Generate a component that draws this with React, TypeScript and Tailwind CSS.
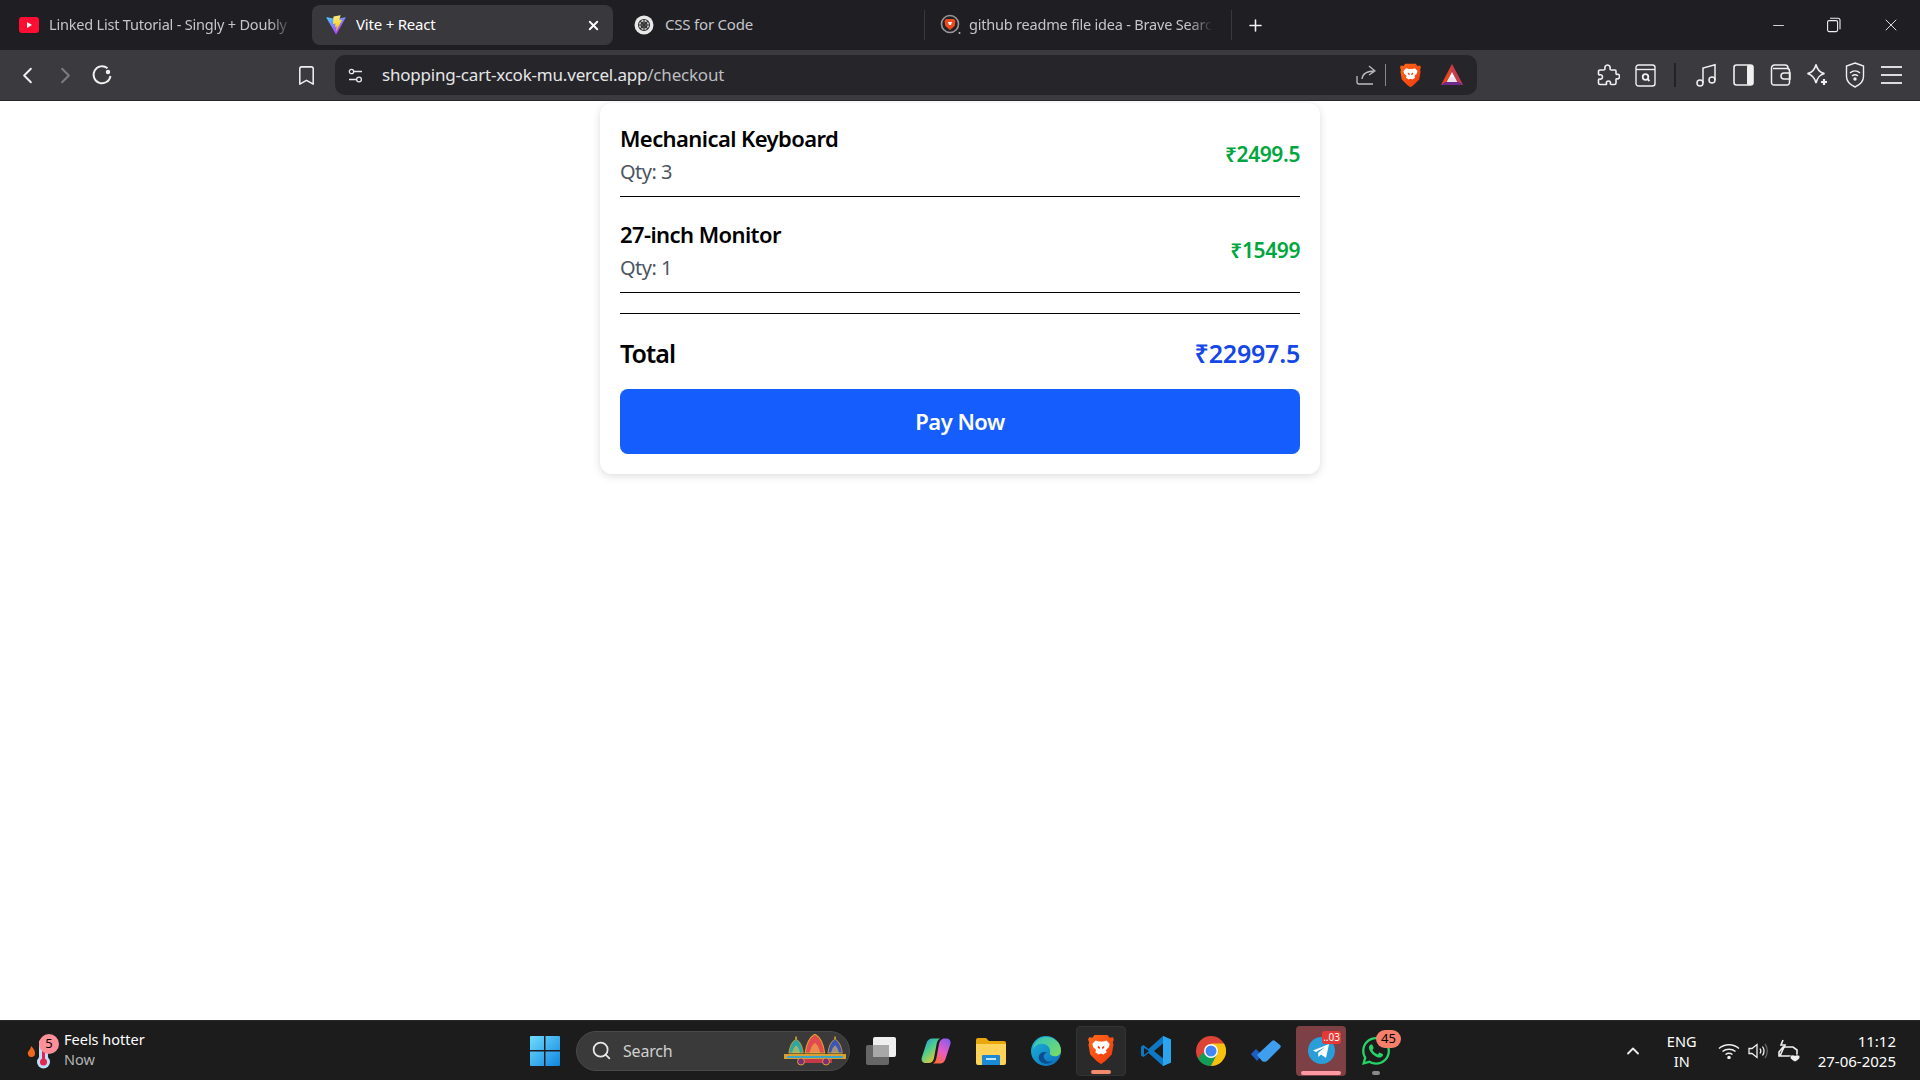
import React from "react";
import { ChevronLeft, ChevronRight, Bookmark, X, Plus, Minus, Search, ChevronUp } from "lucide-react";
import { FaWhatsapp } from "react-icons/fa";

const ui = { fontFamily: '"Noto Sans", "Open Sans", sans-serif' };

function BraveIcon({ size = 22 }: { size?: number }) {
  return (
    <svg width={size} height={size * 1.16} viewBox="0 0 24 28">
      <defs>
        <linearGradient id="brv" x1="0" y1="0" x2="1" y2="1">
          <stop offset="0" stopColor="#ff6a1a" />
          <stop offset="1" stopColor="#f0360e" />
        </linearGradient>
      </defs>
      <path d="M6 1h12l2 2.500 3-.5 1 2-1 3 .6 2L22 19l-6 6-4 3-4-3-6-6L.4 10 1 8 0 5l1-2 3 .5z" fill="url(#brv)" />
      <path d="M7 6l3 1h4l3-1 3 3-.6 3-3 3 1 2-3.4 2-2-1-2 1-3.4-2 1-2-3-3L4 9z" fill="#fff" />
      <path d="M9 11l2 1v2l-2-1zM15 11l-2 1v2l2-1zM10.500 19h3L12 21z" fill="#f0400f" />
    </svg>
  );
}

function ViteIcon() {
  return (
    <svg width="20" height="20" viewBox="0 0 410 404">
      <defs>
        <linearGradient id="v1" x1="0" y1="0" x2="0.6" y2="1">
          <stop offset="0" stopColor="#41d1ff" />
          <stop offset="1" stopColor="#bd34fe" />
        </linearGradient>
        <linearGradient id="v2" x1="0.4" y1="0" x2="0.5" y2="1">
          <stop offset="0" stopColor="#ffea83" />
          <stop offset="0.5" stopColor="#ffdd35" />
          <stop offset="1" stopColor="#ffa800" />
        </linearGradient>
      </defs>
      <path d="M399.600 59.500 215.900 388.200c-3.800 6.800-13.500 6.800-17.400.1L11.200 59.500c-4.200-7.400 2.100-16.300 10.400-14.800l183.900 32.900c1.200.2 2.400.2 3.500 0l180-32.800c8.300-1.500 14.700 7.300 10.600 14.700z" fill="url(#v1)" />
      <path d="M292.900 1.600 156.900 28.300c-2.200.4-3.900 2.300-4 4.600l-8.400 141.300c-.2 3.300 2.900 5.900 6.100 5.200l37.900-8.800c3.500-.8 6.700 2.300 6 5.900l-11.300 55.200c-.8 3.700 2.700 6.900 6.300 5.800l23.400-7.100c3.600-1.100 7.100 2.100 6.300 5.800l-17.900 86.600c-1.100 5.400 6.100 8.400 9.100 3.700l2-3.100 110.700-221c1.900-3.700-1.300-7.900-5.400-7.100l-38.900 7.500c-3.700.7-6.800-2.700-5.700-6.300l25.400-88c1.100-3.600-2.100-7-5.700-6.300z" fill="url(#v2)" />
    </svg>
  );
}

function Tab({ width, active, icon, label, fade, close }: { width: number; active?: boolean; icon: React.ReactNode; label: string; fade?: boolean; close?: boolean }) {
  return (
    <div className={`flex h-10 shrink-0 items-center rounded-lg px-[14px] ${active ? "bg-[#38383d] text-white" : "text-[#c6c6ca]"}`} style={{ width }}>
      <div className="flex w-[20px] shrink-0 justify-center">{icon}</div>
      <div className={`ml-[10px] flex-1 overflow-hidden whitespace-nowrap pb-[1px] ${fade ? "text-[14.5px] tracking-[-0.2px] [mask-image:linear-gradient(to_right,black_90%,transparent)]" : "text-[15px] tracking-[-0.2px]"}`}>{label}</div>
      {close && <X size={15} strokeWidth={3} className="ml-[2px] mr-[-2px] shrink-0" />}
    </div>
  );
}

function TabBar() {
  return (
    <div className="flex h-[50px] items-center bg-[#1e1e23]">
      <div className="ml-[5px] w-[307px] shrink-0">
        <Tab width={302} fade label="Linked List Tutorial - Singly + Doubly" icon={
          <svg width="20" height="16" viewBox="0 0 20 16"><rect width="20" height="16" rx="3" fill="#ff0d33" /><path d="M8 5l5 3-5 3z" fill="#fff" /></svg>
        } />
      </div>
      <Tab width={301} active close label="Vite + React" icon={<ViteIcon />} />
      <div className="w-[311px] shrink-0 pl-[8px]">
        <Tab width={240} label="CSS for Code" icon={
          <svg width="20" height="20" viewBox="0 0 20 20" className="-ml-[2px]">
            <circle cx="10" cy="10" r="9.500" fill="#e8e8e8" />
            <g fill="none" stroke="#333" strokeWidth="1.100">
              <circle cx="10" cy="10" r="5.500" />
              <circle cx="10" cy="10" r="3" />
              <path d="M6 6l8 8M14 6l-8 8M10 4v12M4 10h12" />
            </g>
          </svg>
        } />
      </div>
      <div className="h-[30px] w-px shrink-0 bg-[#38383d]" />
      <div className="w-[306px] shrink-0">
        <Tab width={302} fade label="github readme file idea - Brave Search" icon={
          <svg width="22" height="22" viewBox="0 0 22 22" className="ml-[2px] mr-[-2px] shrink-0">
            <circle cx="10" cy="10" r="8.500" fill="#222" stroke="#999" strokeWidth="1.600" />
            <path d="M6 5h8l1.500 2-.8 5-4.700 4-4.700-4-.8-5z" fill="#f04a1e" />
            <path d="M8 8h4l-1 3h-2z" fill="#fff" />
            <circle cx="19.500" cy="19" r="1" fill="#bbb" />
          </svg>
        } />
      </div>
      <div className="h-[30px] w-px shrink-0 bg-[#38383d]" />
      <Plus size={19} strokeWidth={2} className="ml-[14px] shrink-0 text-[#f2f2f2]" />
      <div className="ml-auto flex items-center text-[#f0f0f0]">
        <div className="flex w-[56px] justify-center"><Minus size={17} strokeWidth={1.200} /></div>
        <div className="flex w-[56px] justify-center">
          <svg width="14" height="16" viewBox="0 0 14 16" fill="none" stroke="currentColor" strokeWidth="1.100"><rect x="0.600" y="3.600" width="10" height="11" rx="1.500" /><path d="M3 1.200h8a2 2 0 0 1 2 2v9" /></svg>
        </div>
        <div className="flex w-[58px] justify-center"><X size={20} strokeWidth={1.100} /></div>
      </div>
    </div>
  );
}

function ToolBtn({ children, w = 37 }: { children: React.ReactNode; w?: number }) {
  return <div className="flex shrink-0 items-center justify-center text-[#f0f0f0]" style={{ width: w }}>{children}</div>;
}

function ToolBar() {
  return (
    <div className="flex h-[51px] items-center border-b border-[#26262a] bg-[#3a3a3f]">
      <div className="ml-[8px] flex">
        <ToolBtn w={38}><ChevronLeft size={27} strokeWidth={1.700} /></ToolBtn>
        <ToolBtn w={38}><ChevronRight size={27} strokeWidth={1.700} className="text-[#7d7d82]" /></ToolBtn>
        <ToolBtn w={36}>
          <svg width="22" height="22" viewBox="0 0 22 22" fill="none" stroke="#f0f0f0" strokeWidth="1.900">
            <path d="M16.500 4.200A8.500 8.500 0 1 0 19.500 12" />
            <circle cx="17" cy="8" r="2.200" fill="#f0f0f0" stroke="none" />
          </svg>
        </ToolBtn>
      </div>
      <div className="ml-[167px]"><ToolBtn w={38}><Bookmark size={23} strokeWidth={1.600} /></ToolBtn></div>
      <div className="ml-[10px] flex h-10 w-[1142px] shrink-0 items-center rounded-[10px] bg-[#25252a] pl-[12px] pr-[13px]">
        <svg width="17" height="17" viewBox="0 0 17 17" fill="none" stroke="#e8e8e8" strokeWidth="1.300" className="shrink-0">
          <circle cx="4.500" cy="4.500" r="2.200" /><path d="M7 4.500h8M2 12.500h7" /><circle cx="12" cy="12.500" r="2.400" />
        </svg>
        <div className="ml-[18px] whitespace-nowrap text-[17px] tracking-[-0.2px]">
          <span className="text-[#e6e6e6]">shopping-cart-xcok-mu.vercel.app</span><span className="text-[#bdbdc0]">/checkout</span>
        </div>
        <div className="ml-auto flex items-center">
          <svg width="20" height="20" viewBox="0 0 20 20" fill="none" stroke="#bdbdc0" strokeWidth="1.300">
            <path d="M1 11v6a2 2 0 0 0 2 2h14M6 14c.5-5 4-8 13-8M13 1l6 5-6 4" />
          </svg>
          <div className="ml-[9px] h-[22px] w-px bg-[#88888c]" />
          <div className="ml-[14px]"><BraveIcon size={21} /></div>
          <svg width="24" height="24" viewBox="0 0 24 24" className="ml-[19px]">
            <path d="M12 1 1 22h22z" fill="#e8461f" />
            <path d="M12 1 23 22H8z" fill="#a8327a" opacity="0.55" />
            <path d="M1 22l4-3h14l4 3z" fill="#6e2a8c" />
            <path d="M12 9l5 10H7z" fill="#fff" />
            <path d="M9.500 14h5l2.500 5H7z" fill="#e9e3ee" />
          </svg>
        </div>
      </div>
      <div className="ml-[113px] flex items-center">
        <ToolBtn>
          <svg width="23" height="23" viewBox="0 0 23 23" fill="none" stroke="currentColor" strokeWidth="1.600" strokeLinejoin="round">
            <path d="M8 5c-.5-2 .5-4 2.500-4S13.500 3 13 5c0 .7.5 1 1.500 1H18a1 1 0 0 1 1 1v2.500c0 .8.700 1 1.500.8 1.500-.3 2 1 2 2.200s-.8 2.600-2.300 2.300c-.8-.2-1.200.2-1.200 1V19a1.500 1.500 0 0 1-1.500 1.500h-3c-1 0-1.300-.6-1.100-1.300.3-1-.2-2.200-1.900-2.200s-2.500 1.200-2 2.300c.3.7 0 1.200-1 1.200H3A1.500 1.500 0 0 1 1.500 19v-3c0-.8.600-1.200 1.300-1 1.200.3 2.700-.3 2.700-2s-1.500-2.500-2.700-2.200C2.100 11 1.500 10.700 1.500 10V7.500A1.500 1.500 0 0 1 3 6h3.500C7.500 6 8 5.700 8 5z" />
          </svg>
        </ToolBtn>
        <ToolBtn>
          <svg width="21" height="23" viewBox="0 0 21 23" fill="none" stroke="currentColor" strokeWidth="1.400"><rect x="1" y="1" width="19" height="21" rx="2.500" /><path d="M1 5.500h19" /><circle cx="10.500" cy="13" r="2.800" strokeWidth="1.800" /><path d="M12.500 15l2 2" strokeWidth="1.800" /></svg>
        </ToolBtn>
        <div className="mx-[10px] h-[24px] w-[2px] bg-[#232327]" />
        <div className="ml-[2px]" />
        <ToolBtn>
          <svg width="21" height="24" viewBox="0 0 21 24" fill="none" stroke="currentColor" strokeWidth="1.500"><circle cx="4" cy="20" r="3" /><circle cx="16" cy="17" r="3" /><path d="M7 20V5l12-3.200V17" /></svg>
        </ToolBtn>
        <ToolBtn>
          <svg width="21" height="22" viewBox="0 0 21 22"><rect x="1" y="1" width="19" height="20" rx="2.500" fill="none" stroke="#f0f0f0" strokeWidth="1.600" /><rect x="14" y="1" width="6" height="20" rx="1.500" fill="#f0f0f0" /></svg>
        </ToolBtn>
        <ToolBtn>
          <svg width="21" height="22" viewBox="0 0 21 22" fill="none" stroke="currentColor" strokeWidth="1.500"><path d="M3 4.500h14a2.500 2.500 0 0 1 2.500 2.500v11.500A2.500 2.500 0 0 1 17 21H4a2.500 2.500 0 0 1-2.500-2.500V4A3 3 0 0 1 4.500 1H15a3 3 0 0 1 3 3" /><path d="M20 9h-6a2.500 2.500 0 0 0 0 6h6z" /></svg>
        </ToolBtn>
        <ToolBtn>
          <svg width="23" height="24" viewBox="0 0 23 24" fill="none" stroke="currentColor" strokeWidth="1.600"><path d="M10 1.500c1.200 5.500 3.500 8 8.500 9-5 1.300-7 3.700-8.500 9.500C8.700 14.300 6.500 12 1.500 10.500c5-1 7.300-3.500 8.500-9z" /><path d="M18 16v6M15 19h6" strokeWidth="2.200" /></svg>
        </ToolBtn>
        <ToolBtn>
          <svg width="20" height="26" viewBox="0 0 20 26" fill="none" stroke="currentColor" strokeWidth="1.400"><path d="M10 1l8.500 3v10.500c0 5-4 8.500-8.500 10.500C5.500 23 1.500 19.500 1.500 14.500V4z" /><path d="M5 11c3-2.800 7-2.800 10 0M7 14c2-1.600 4-1.600 6 0" /><circle cx="10" cy="17" r="1" fill="currentColor" /></svg>
        </ToolBtn>
        <ToolBtn>
          <svg width="21" height="20" viewBox="0 0 21 20" stroke="#dcdcdc" strokeWidth="1.800"><path d="M0 2h21M0 10h21M0 18h21" /></svg>
        </ToolBtn>
      </div>
    </div>
  );
}

function Item({ name, qty, price }: { name: string; qty: number; price: string }) {
  return (
    <div className="mb-[14px] flex items-center justify-between border-b border-black pb-[10px] pt-[9px]">
      <div>
        <div className="text-[22px] font-semibold leading-[28px] tracking-[-0.58px] text-black">{name}</div>
        <div className="mt-[6px] text-[20px] leading-[28px] tracking-[-0.5px] text-[#4b5563]">Qty: {qty}</div>
      </div>
      <div className="text-[21px] font-semibold tracking-[-0.4px] text-[#00a63e]">{price}</div>
    </div>
  );
}

function Page() {
  return (
    <div className="flex-1 overflow-hidden bg-white pt-[2px]">
      <div className="mx-auto w-[720px] rounded-xl bg-white px-5 pb-5 pt-[12px] shadow-[0_2px_8px_rgba(0,0,0,0.14)]">
        <Item name="Mechanical Keyboard" qty={3} price="₹2499.5" />
        <Item name="27-inch Monitor" qty={1} price="₹15499" />
        <div className="mt-[20px] border-t border-black pt-[21px]">
          <div className="flex items-center justify-between">
            <div className="text-[25px] font-semibold leading-[36px] tracking-[-0.9px] text-black">Total</div>
            <div className="text-[25px] font-semibold leading-[36px] tracking-[-0.2px] text-[#1447e6]">₹22997.5</div>
          </div>
          <button className="mt-[18px] flex h-[65px] w-full items-center justify-center rounded-lg bg-[#155dfc] text-[22px] font-semibold tracking-[-0.5px] text-white">Pay Now</button>
        </div>
      </div>
    </div>
  );
}

function TaskIcon({ children, box }: { children: React.ReactNode; box?: "brave" | "tg" }) {
  const cls = box === "brave" ? "bg-[#2a2a2a] rounded border border-[#333]" : box === "tg" ? "bg-[#7d4045] rounded" : "";
  return <div className={`relative flex h-[50px] w-[50px] shrink-0 items-center justify-center ${cls}`}>{children}</div>;
}

function Chariot({ x, s, c }: { x: number; s: number; c: string }) {
  return (
    <g transform={`translate(${x} ${19 - 19 * s}) scale(${s})`}>
      <path d="M1 19C2 12 4 6 9 3V0h1v3c5 3 7 9 8 16z" fill={c} stroke="#d8a030" strokeWidth="1" />
      <path d="M5 19c.5-4 2-7 4.500-9 2.500 2 4 5 4.500 9z" fill="#f2c24a" opacity=".55" />
    </g>
  );
}

function Chariots() {
  return (
    <svg width="62" height="36" viewBox="0 0 62 36" className="mt-[2px]">
      <Chariot x={4} s={0.85} c="#2ea7a0" />
      <Chariot x={20} s={1.150} c="#e24a4f" />
      <Chariot x={43} s={0.85} c="#3a55b5" />
      <rect x="0" y="20" width="62" height="5" fill="#d8a030" />
      <rect x="3" y="22" width="56" height="2" fill="#3aa7c8" />
      <rect x="14" y="25" width="34" height="4" fill="#c43a4a" />
      <circle cx="17" cy="27.500" r="3.500" fill="#7a2f78" stroke="#d8a030" />
      <circle cx="42" cy="27.500" r="3.500" fill="#7a2f78" stroke="#d8a030" />
    </svg>
  );
}

function TaskBar() {
  return (
    <div className="flex h-[60px] items-center border-t border-[#2b2b2b] bg-[#1c1c1c] text-white">
      <div className="flex w-[530px] shrink-0 items-center">
        <div className="relative ml-[26px] h-[40px] w-[36px] shrink-0">
          <svg width="36" height="40" viewBox="0 0 36 40" className="absolute left-0 top-0">
            <path d="M5 15c2 2 4 4 4 7a3.500 3.500 0 0 1-7 1c-1-3 3-4 3-8z" fill="#f2671f" />
            <rect x="13" y="8" width="9" height="22" rx="4" fill="#bde0f8" />
            <circle cx="17.500" cy="31" r="6.500" fill="#bde0f8" />
            <rect x="16" y="14" width="3" height="16" fill="#e5244f" />
            <circle cx="17.500" cy="31" r="3.500" fill="#e5244f" />
          </svg>
          <div className="absolute left-[13px] top-[3px] flex h-[20px] w-[20px] items-center justify-center rounded-full bg-[#ff8f99] text-[13px] leading-none text-black">5</div>
        </div>
        <div className="ml-[2px] -mt-[4px] text-[14.5px] leading-[20px]">
          <div>Feels hotter</div>
          <div className="text-[#b4b4b4]">Now</div>
        </div>
      </div>
      <svg width="30" height="30" viewBox="0 0 30 30" className="shrink-0">
        <defs>
          <linearGradient id="win" x1="0" y1="0" x2="1" y2="1"><stop offset="0" stopColor="#6fdcff" /><stop offset="1" stopColor="#0f86df" /></linearGradient>
        </defs>
        <path d="M1 0h13v14H0V1a1 1 0 0 1 1-1zM15.500 0H29a1 1 0 0 1 1 1v13H15.500zM0 15.500h14V30H1a1 1 0 0 1-1-1zM15.500 15.500H30V29a1 1 0 0 1-1 1H15.500z" fill="url(#win)" />
      </svg>
      <div className="ml-[16px] flex h-10 w-[274px] shrink-0 items-center rounded-full border border-[#4a4a4a] bg-[#3a3a3a] pl-[14px] pr-[3px]">
        <Search size={21} strokeWidth={2} className="text-[#e8e8e8]" />
        <span className="ml-[11px] text-[16px] tracking-[-0.2px] text-[#d0d0d0]">Search</span>
        <div className="ml-auto"><Chariots /></div>
      </div>
      <div className="ml-[6px] flex items-center">
        <TaskIcon>
          <svg width="30" height="28" viewBox="0 0 30 28"><rect x="0" y="8" width="23" height="20" rx="2" fill="#666" /><rect x="7" y="0" width="23" height="20" rx="2" fill="#efefef" /><rect x="7" y="8" width="16" height="12" fill="#a8a8a8" /></svg>
        </TaskIcon>
        <div className="w-[5px]" />
        <TaskIcon>
          <svg width="30" height="30" viewBox="0 0 30 30">
            <defs>
              <linearGradient id="cp1" x1="0" y1="0" x2="0.7" y2="1"><stop offset="0" stopColor="#1f8fe8" /><stop offset="0.5" stopColor="#4fd08a" /><stop offset="1" stopColor="#f9c52f" /></linearGradient>
              <linearGradient id="cp2" x1="0.8" y1="0" x2="0.3" y2="1"><stop offset="0" stopColor="#8a5cf0" /><stop offset="0.55" stopColor="#ea5cc0" /><stop offset="1" stopColor="#ff6a3a" /></linearGradient>
            </defs>
            <path d="M11 2.500h8c-2 1-3 3-3.500 6L13 22c-.5 3-2.500 5-5.500 5H4.500C1.500 27 0 24.500.8 21.500L5.500 7C6.500 4 8.500 2.500 11 2.500z" fill="url(#cp1)" />
            <path d="M19 27.500h-7c2-1 3-3 3.500-6L18 8c.5-3 2.500-5.500 5.500-5.500h2c3 0 4.700 2.500 3.900 5.500L24.500 23c-1 3-3 4.500-5.500 4.500z" fill="url(#cp2)" />
          </svg>
        </TaskIcon>
        <div className="w-[5px]" />
        <TaskIcon>
          <svg width="30" height="28" viewBox="0 0 30 28">
            <path d="M0 3a2 2 0 0 1 2-2h8l3 3h15a2 2 0 0 1 2 2v4H0z" fill="#e8a80c" />
            <path d="M0 7h30v19a2 2 0 0 1-2 2H2a2 2 0 0 1-2-2z" fill="#fdd35a" />
            <path d="M7 18h16a1 1 0 0 1 1 1v9H6v-9a1 1 0 0 1 1-1z" fill="#1a8ad6" />
            <rect x="10" y="21" width="10" height="2" fill="#bfe5fa" />
          </svg>
        </TaskIcon>
        <div className="w-[5px]" />
        <TaskIcon>
          <svg width="30" height="30" viewBox="0 0 30 30">
            <defs>
              <linearGradient id="ed1" x1="0" y1="0" x2="1" y2="1"><stop offset="0" stopColor="#1fb8d8" /><stop offset="1" stopColor="#0a6bbd" /></linearGradient>
              <linearGradient id="ed2" x1="0" y1="0" x2="1" y2="1"><stop offset="0" stopColor="#2ec4c4" /><stop offset="1" stopColor="#7fdc5e" /></linearGradient>
            </defs>
            <circle cx="15" cy="15" r="15" fill="url(#ed1)" />
            <path d="M15 1c8 0 15 5 15 14 0 4-4 6-8 5-4-1-3-3-3-5 0-4-4-8-10-7-3 .5-5 2-7 5C3 6 8 1 15 1z" fill="url(#ed2)" />
            <path d="M22 25c-3 3-8 4-12 1-3-2-3-7 0-9 2-1.500 5-1.500 6 0-2 0-4 2-3 5 1 3 5 5 9 3z" fill="#0c4c8f" />
          </svg>
        </TaskIcon>
        <div className="w-[5px]" />
        <TaskIcon box="brave">
          <div className="-mt-[3px]"><BraveIcon size={26} /></div>
          <div className="absolute bottom-[1px] left-[14px] h-[4px] w-[20px] rounded bg-[#f28a6e]" />
        </TaskIcon>
        <div className="w-[5px]" />
        <TaskIcon>
          <svg width="30" height="30" viewBox="0 0 30 30">
            <path d="M22 0l8 3.500v23L22 30 7.500 17 2.500 21 0 19.500v-9L2.500 9l5 4z" fill="#0f78c4" />
            <path d="M22 0l8 3.500v23L22 30z" fill="#2ca5ee" />
            <path d="M22 7.500l-9 7.500 9 7.500z" fill="#1c1c1c" />
            <path d="M3 12l5 3-5 4z" fill="#1c1c1c" />
          </svg>
        </TaskIcon>
        <div className="w-[5px]" />
        <TaskIcon>
          <svg width="30" height="30" viewBox="0 0 30 30">
            <circle cx="15" cy="15" r="15" fill="#db4437" />
            <path d="M2 22.500A15 15 0 0 0 15 30l7.500-15H15l-7 0z" fill="#0f9d58" />
            <path d="M15 30A15 15 0 0 0 28 7.500H15l7.500 7.500z" fill="#f4c20d" />
            <path d="M2 7.500 8.500 19 15 7.500z" fill="#db4437" />
            <circle cx="15" cy="15" r="7" fill="#fff" />
            <circle cx="15" cy="15" r="5.500" fill="#4285f4" />
          </svg>
        </TaskIcon>
        <div className="w-[5px]" />
        <TaskIcon>
          <svg width="30" height="22" viewBox="0 0 30 22">
            <path d="M0 14l5-5 6 6-5 6z" fill="#1d5fc0" />
            <path d="M11 21 6 15 21 1c1-1 2-1 3 0l5 4c1 1 1 2 0 3L16 21c-1 1-4 1-5 0z" fill="#3f9fee" />
          </svg>
        </TaskIcon>
        <div className="w-[5px]" />
        <TaskIcon box="tg">
          <svg width="27" height="27" viewBox="0 0 27 27"><circle cx="13.500" cy="13.500" r="13.500" fill="#2a9ed8" /><path d="M5 13.500l16-6.500-3 14-5-3.500-2.500 2.500-.5-4 7-6-9 5z" fill="#fff" /></svg>
          <div className="absolute right-[5px] top-[5px] flex h-[13px] items-center rounded-[3px] bg-[#e53935] px-[1px] text-[10px] leading-none text-white">..03</div>
          <div className="absolute bottom-[1px] left-[5px] h-[4px] w-[40px] rounded bg-[#ff9aa5]" />
        </TaskIcon>
        <div className="w-[5px]" />
        <TaskIcon>
          <FaWhatsapp size={32} className="text-[#25d366]" />
          <div className="absolute right-[0px] top-[4px] flex h-[18px] w-[25px] items-center justify-center rounded-full bg-[#f4806c] text-[13px] leading-none text-black">45</div>
          <div className="absolute bottom-[1px] left-[21px] h-[4px] w-[8px] rounded bg-[#8a8a8a]" />
        </TaskIcon>
      </div>
      <div className="ml-auto flex items-center pr-[24px]">
        <ChevronUp size={20} strokeWidth={2.200} className="text-[#ececec]" />
        <div className="ml-[19px] w-[40px] text-center text-[14.5px] leading-[20px]">ENG<br />IN</div>
        <svg width="22" height="16" viewBox="0 0 22 16" fill="none" stroke="#efefef" strokeWidth="1.500" className="ml-[16px]">
          <path d="M1 5.500c5.500-5 14.500-5 20 0M4.500 8.500c3.500-3 9.500-3 13 0M7.500 11.500c2-1.500 5-1.500 7 0" /><circle cx="11" cy="14.500" r="1" fill="#efefef" />
        </svg>
        <svg width="20" height="18" viewBox="0 0 20 18" fill="none" stroke="#efefef" strokeWidth="1.300" className="ml-[8px]">
          <path d="M1 6.500v5h3l5 4v-13l-5 4z" /><path d="M12 6.500c1 1.500 1 3.500 0 5M14.500 4.500c2 3 2 6 0 9" /><path d="M17 2c3 4 3 10 0 14" stroke="#666" />
        </svg>
        <svg width="24" height="24" viewBox="0 0 24 24" fill="none" stroke="#efefef" strokeWidth="1.600" className="ml-[9px]">
          <path d="M6 8h10l4 3v6H2V13zM3 17l4-9" /><path d="M6 1L4 6h4L6 10" />
          <path d="M18 23c-3.500-2-5-3.500-5-5 0-2 3.500-3 5-1 1.500-2 5-1 5 1 0 1.500-1.500 3-5 5z" fill="#efefef" stroke="#1c1c1c" strokeWidth="0.800" />
        </svg>
        <div className="ml-[17px] text-right text-[15px] leading-[20px]">
          <div>11:12</div>
          <div>27-06-2025</div>
        </div>
      </div>
    </div>
  );
}

export default function App() {
  return (
    <div className="flex h-[1080px] w-[1920px] flex-col overflow-hidden" style={ui}>
      <TabBar />
      <ToolBar />
      <Page />
      <TaskBar />
    </div>
  );
}
